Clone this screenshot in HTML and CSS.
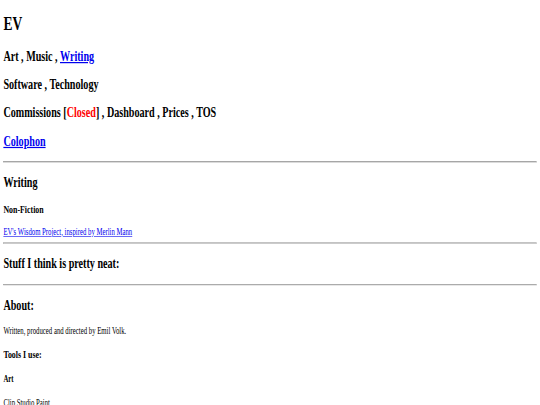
FILE: index.html
```html
<!DOCTYPE html>
<html lang="en">
<head>
<meta charset="utf-8">
<title>EV</title>
<link rel="stylesheet" href="styles.css">
</head>
<body class="site">
<div class="page">
  <h1 class="title">EV</h1>
  <h2 class="nav">Art , Music , <a class="link" href="#writing">Writing</a></h2>
  <h2 class="nav">Software , Technology</h2>
  <h2 class="nav">Commissions [<span class="closed">Closed</span>] , Dashboard , Prices , TOS</h2>
  <h2 class="nav"><a class="link" href="#colophon">Colophon</a></h2>
  <hr class="rule">
  <h2 class="section" id="writing">Writing</h2>
  <h3 class="tools">Non-Fiction</h3>
  <div class="line"><a class="link" href="#wisdom">EV's Wisdom Project, inspired by Merlin Mann</a></div>
  <hr class="rule">
  <h2 class="section">Stuff I think is pretty neat:</h2>
  <hr class="rule">
  <h2 class="section" id="colophon">About:</h2>
  <p class="text">Written, produced and directed by Emil Volk.</p>
  <h3 class="tools">Tools I use:</h3>
  <h4 class="sub">Art</h4>
  <p class="text">Clip Studio Paint</p>
</div>
</body>
</html>
```

FILE: styles.css
```css
html, body.site {
  margin: 0;
  padding: 0;
  background: #ffffff;
  overflow: hidden;
}

.page {
  display: flow-root;
  box-sizing: border-box;
  width: 1280px;
  padding: 0 8px;
  font-family: "Liberation Serif", "Times New Roman", serif;
  color: #000000;
  transform: scale(0.421875, 0.602);
  transform-origin: 0 0;
}

.title {
  font-size: 32px;
  margin: 21.44px 0;
  font-weight: bold;
}

.nav,
.section {
  font-size: 24px;
  margin: 19.92px 0;
  font-weight: bold;
}

.tools {
  font-size: 18.72px;
  margin: 18.72px 0;
  font-weight: bold;
}

.sub {
  font-size: 16px;
  margin: 21.28px 0;
  font-weight: bold;
}

.text {
  font-size: 16px;
  margin: 16px 0;
}

.line {
  font-size: 16px;
}

.link {
  color: #0000ee;
  text-decoration: underline;
}

.closed {
  color: #ff0000;
}

.rule {
  margin: 8px 0;
  border: 1px inset #bdbdbd;
  height: 0;
}
```
